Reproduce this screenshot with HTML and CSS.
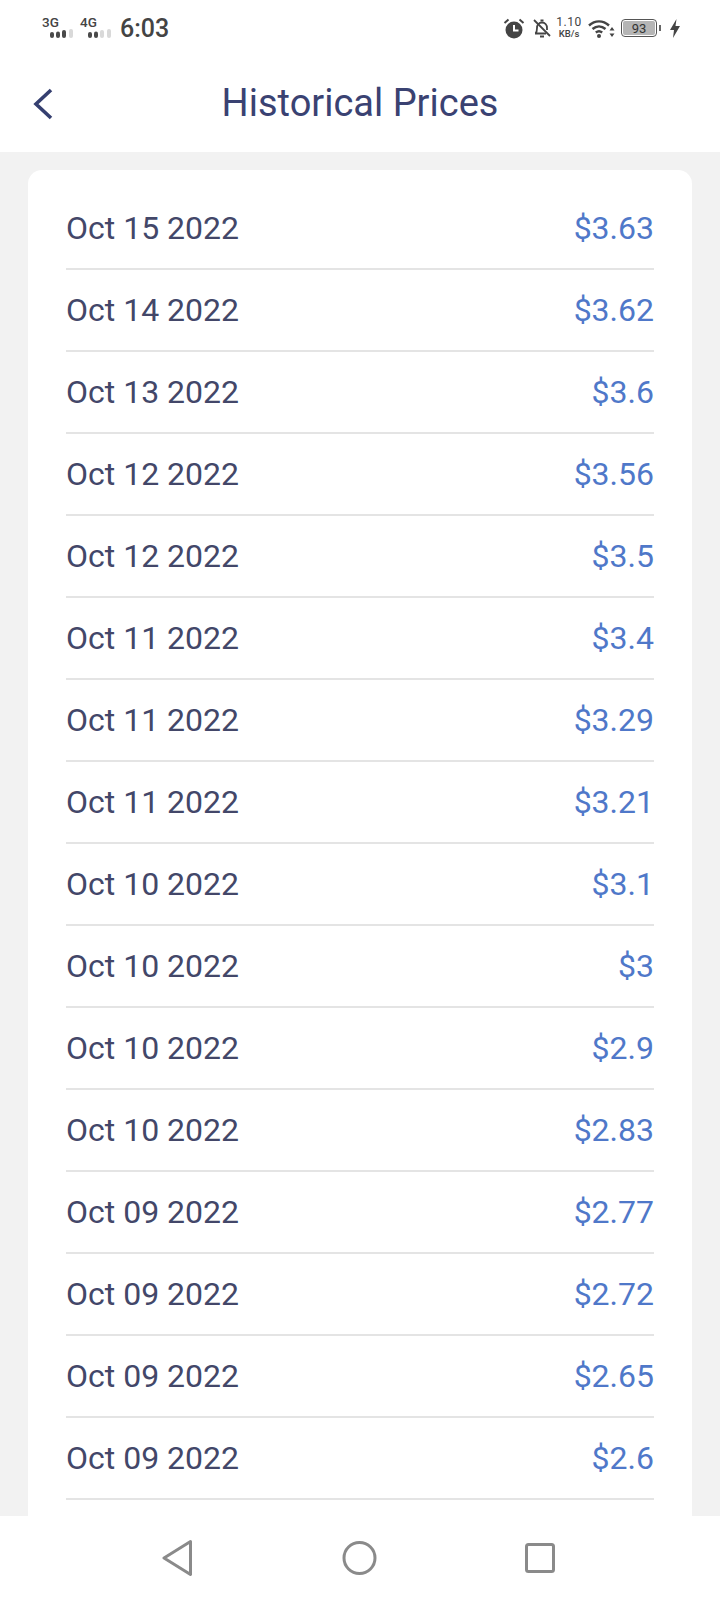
FILE: index.html
```html
<html>
	<head>
		<title>Historical Prices</title>
		<link rel="stylesheet" href="styles.css">
	</head>
	<body>
		<div id="screen">
			<div id="statusBar">
				<div class="statusGroup">
					<div class="signal">
						<span class="signalName">3G</span>
						<svg class="signalBars" width="24" height="9" viewBox="0 0 24 9">
							<rect x="0" y="3" width="4" height="6" rx="2" fill="#4a4a4a"/>
							<rect x="6" y="2.500" width="4" height="6.500" rx="2" fill="#4a4a4a"/>
							<rect x="12" y="1" width="4" height="8" rx="2" fill="#4a4a4a"/>
							<rect x="19" y="0" width="4" height="9" rx="2" fill="#d9d9d9"/>
						</svg>
					</div>
					<div class="signal">
						<span class="signalName">4G</span>
						<svg class="signalBars" width="24" height="9" viewBox="0 0 24 9">
							<rect x="0" y="3" width="4" height="6" rx="2" fill="#4a4a4a"/>
							<rect x="6" y="2.500" width="4" height="6.500" rx="2" fill="#4a4a4a"/>
							<rect x="12" y="1" width="4" height="8" rx="2" fill="#d9d9d9"/>
							<rect x="19" y="0" width="4" height="9" rx="2" fill="#d9d9d9"/>
						</svg>
					</div>
					<span id="clock">6:03</span>
				</div>
				<div class="statusGroup">
					<svg class="alarmIcon" width="22" height="21" viewBox="0 0 22 21">
						<circle cx="11" cy="12" r="8.500" fill="#444"/>
						<path d="M11 7v5.500h4.500" fill="none" stroke="#fff" stroke-width="2"/>
						<path d="M1.500 5L5.500 1.500M20.500 5L16.500 1.500" stroke="#444" stroke-width="2" fill="none"/>
					</svg>
					<svg class="bellIcon" width="20" height="21" viewBox="0 0 20 21">
						<path d="M3.500 15.500c1.500-1.500 1.500-3 1.500-5.500 0-3 2-5.500 5-5.500s5 2.500 5 5.500v2M3 15.500h11" fill="none" stroke="#444" stroke-width="1.800"/>
						<path d="M2 2l16 16" stroke="#444" stroke-width="1.800"/>
						<rect x="8.500" y="1.500" width="3" height="2" fill="#444"/>
						<rect x="8" y="17.500" width="4" height="2" fill="#444"/>
					</svg>
					<div id="speed">
						<span id="speedValue">1.10</span>
						<span id="speedUnit">KB/s</span>
					</div>
					<svg class="wifiIcon" width="27" height="19" viewBox="0 0 27 19">
						<path d="M1 6.500C7 1 15 1 21 6.500" fill="none" stroke="#444" stroke-width="2.400"/>
						<path d="M4.500 10C8.500 6.500 13.500 6.500 17.500 10" fill="none" stroke="#444" stroke-width="2.400"/>
						<path d="M7.800 13.500C10 11.800 12 11.800 14.200 13.500" fill="none" stroke="#444" stroke-width="2.400"/>
						<circle cx="11" cy="17" r="2" fill="#444"/>
						<path d="M24 8l2.500 3.500h-5zM24 18l2.500-3.500h-5z" fill="#444"/>
					</svg>
					<div id="battery">
						<div id="batteryBody"><span id="batteryLevel">93</span></div>
						<div id="batteryTip"></div>
					</div>
					<svg id="bolt" width="10" height="19" viewBox="0 0 10 19">
						<path d="M6.500 0L0 11h4l-1 8 7-12H5.500z" fill="#444"/>
					</svg>
				</div>
			</div>
			<div id="header">
				<svg id="backButton" width="22" height="32" viewBox="0 0 22 32">
					<path d="M19 2L4 16l15 14" fill="none" stroke="#353f70" stroke-width="3.600"/>
				</svg>
				<span id="title">Historical Prices</span>
			</div>
			<div id="content">
				<div class="card">
					<div class="priceRow"><span class="date">Oct 15 2022</span><span class="price">$3.63</span></div>
					<div class="priceRow"><span class="date">Oct 14 2022</span><span class="price">$3.62</span></div>
					<div class="priceRow"><span class="date">Oct 13 2022</span><span class="price">$3.6</span></div>
					<div class="priceRow"><span class="date">Oct 12 2022</span><span class="price">$3.56</span></div>
					<div class="priceRow"><span class="date">Oct 12 2022</span><span class="price">$3.5</span></div>
					<div class="priceRow"><span class="date">Oct 11 2022</span><span class="price">$3.4</span></div>
					<div class="priceRow"><span class="date">Oct 11 2022</span><span class="price">$3.29</span></div>
					<div class="priceRow"><span class="date">Oct 11 2022</span><span class="price">$3.21</span></div>
					<div class="priceRow"><span class="date">Oct 10 2022</span><span class="price">$3.1</span></div>
					<div class="priceRow"><span class="date">Oct 10 2022</span><span class="price">$3</span></div>
					<div class="priceRow"><span class="date">Oct 10 2022</span><span class="price">$2.9</span></div>
					<div class="priceRow"><span class="date">Oct 10 2022</span><span class="price">$2.83</span></div>
					<div class="priceRow"><span class="date">Oct 09 2022</span><span class="price">$2.77</span></div>
					<div class="priceRow"><span class="date">Oct 09 2022</span><span class="price">$2.72</span></div>
					<div class="priceRow"><span class="date">Oct 09 2022</span><span class="price">$2.65</span></div>
					<div class="priceRow"><span class="date">Oct 09 2022</span><span class="price">$2.6</span></div>
				</div>
			</div>
			<div id="navBar">
				<svg width="32" height="38" viewBox="0 0 32 38">
					<path d="M28.500 2.500L2 19l26.500 16.500z" fill="none" stroke="#8a8a8a" stroke-width="3" stroke-linejoin="round"/>
				</svg>
				<svg width="36" height="36" viewBox="0 0 36 36">
					<circle cx="18.500" cy="18" r="15.500" fill="none" stroke="#8a8a8a" stroke-width="3"/>
				</svg>
				<svg width="32" height="32" viewBox="0 0 32 32">
					<rect x="2.500" y="2.500" width="27" height="27" rx="2" fill="none" stroke="#8a8a8a" stroke-width="3"/>
				</svg>
			</div>
		</div>
	</body>
</html>
```

FILE: styles.css
```css
body {
	margin:0;
	background-color:#fff;
	font-family: Roboto, "Liberation Sans", sans-serif;
}

#screen {
	width:720px;
	height:1600px;
	display:flex;
	flex-direction:column;
	overflow:hidden;
}

#statusBar {
	height:56px;
	padding:0 40px 0 42px;
	display:flex;
	justify-content:space-between;
	align-items:center;
	flex-shrink:0;
	color:#444;
}

.statusGroup {
	display:flex;
	align-items:center;
}

.alarmIcon {
	margin-right:7px;
}

.bellIcon {
	margin-right:4px;
}

.wifiIcon {
	margin-right:6px;
}

.signal {
	width:38px;
	height:22px;
	display:flex;
	flex-direction:column;
	position:relative;
}

.signalName {
	font-size:13.500px;
	font-weight:500;
	line-height:11px;
}

.signalBars {
	position:absolute;
	left:8px;
	top:12px;
}

#clock {
	font-size:25px;
	font-weight:500;
	margin-left:2px;
}

#speed {
	width:26px;
	margin-right:6px;
	display:flex;
	flex-direction:column;
	align-items:center;
	line-height:12px;
}

#speedValue {
	font-size:12px;
	letter-spacing:0.500px;
}

#speedUnit {
	font-size:9.500px;
	font-weight:500;
}

#battery {
	display:flex;
	align-items:center;
	margin-right:9px;
}

#batteryBody {
	width:32px;
	height:14px;
	border:1.500px solid #555;
	border-radius:4px;
	background-color:#b5b5b5;
	background-clip:content-box;
	padding:1px;
	display:flex;
	justify-content:center;
	align-items:center;
	font-size:13px;
	color:#333;
}

#batteryTip {
	width:2px;
	height:6px;
	margin-left:2px;
	background-color:#666;
}

#header {
	height:96px;
	flex-shrink:0;
	position:relative;
	display:flex;
	justify-content:center;
	align-items:center;
}

#backButton {
	position:absolute;
	left:32px;
	top:32px;
}

#title {
	font-size:38px;
	color:#3a4272;
	margin-bottom:2px;
}

#content {
	flex:1;
	min-height:0;
	overflow:hidden;
	background-color:#f2f2f2;
	padding:18px 28px 0 28px;
}

.card {
	background-color:#fff;
	border-radius:14px;
	padding:18px 38px 60px 38px;
}

.priceRow {
	height:80px;
	border-bottom:2px solid #e4e4e4;
	display:flex;
	justify-content:space-between;
	align-items:center;
	font-size:32px;
}

.date {
	color:#434769;
}

.price {
	color:#4f78c9;
}

#navBar {
	height:84px;
	flex-shrink:0;
	background-color:#fff;
	padding:0 164px 0 162px;
	display:flex;
	justify-content:space-between;
	align-items:center;
}
```
